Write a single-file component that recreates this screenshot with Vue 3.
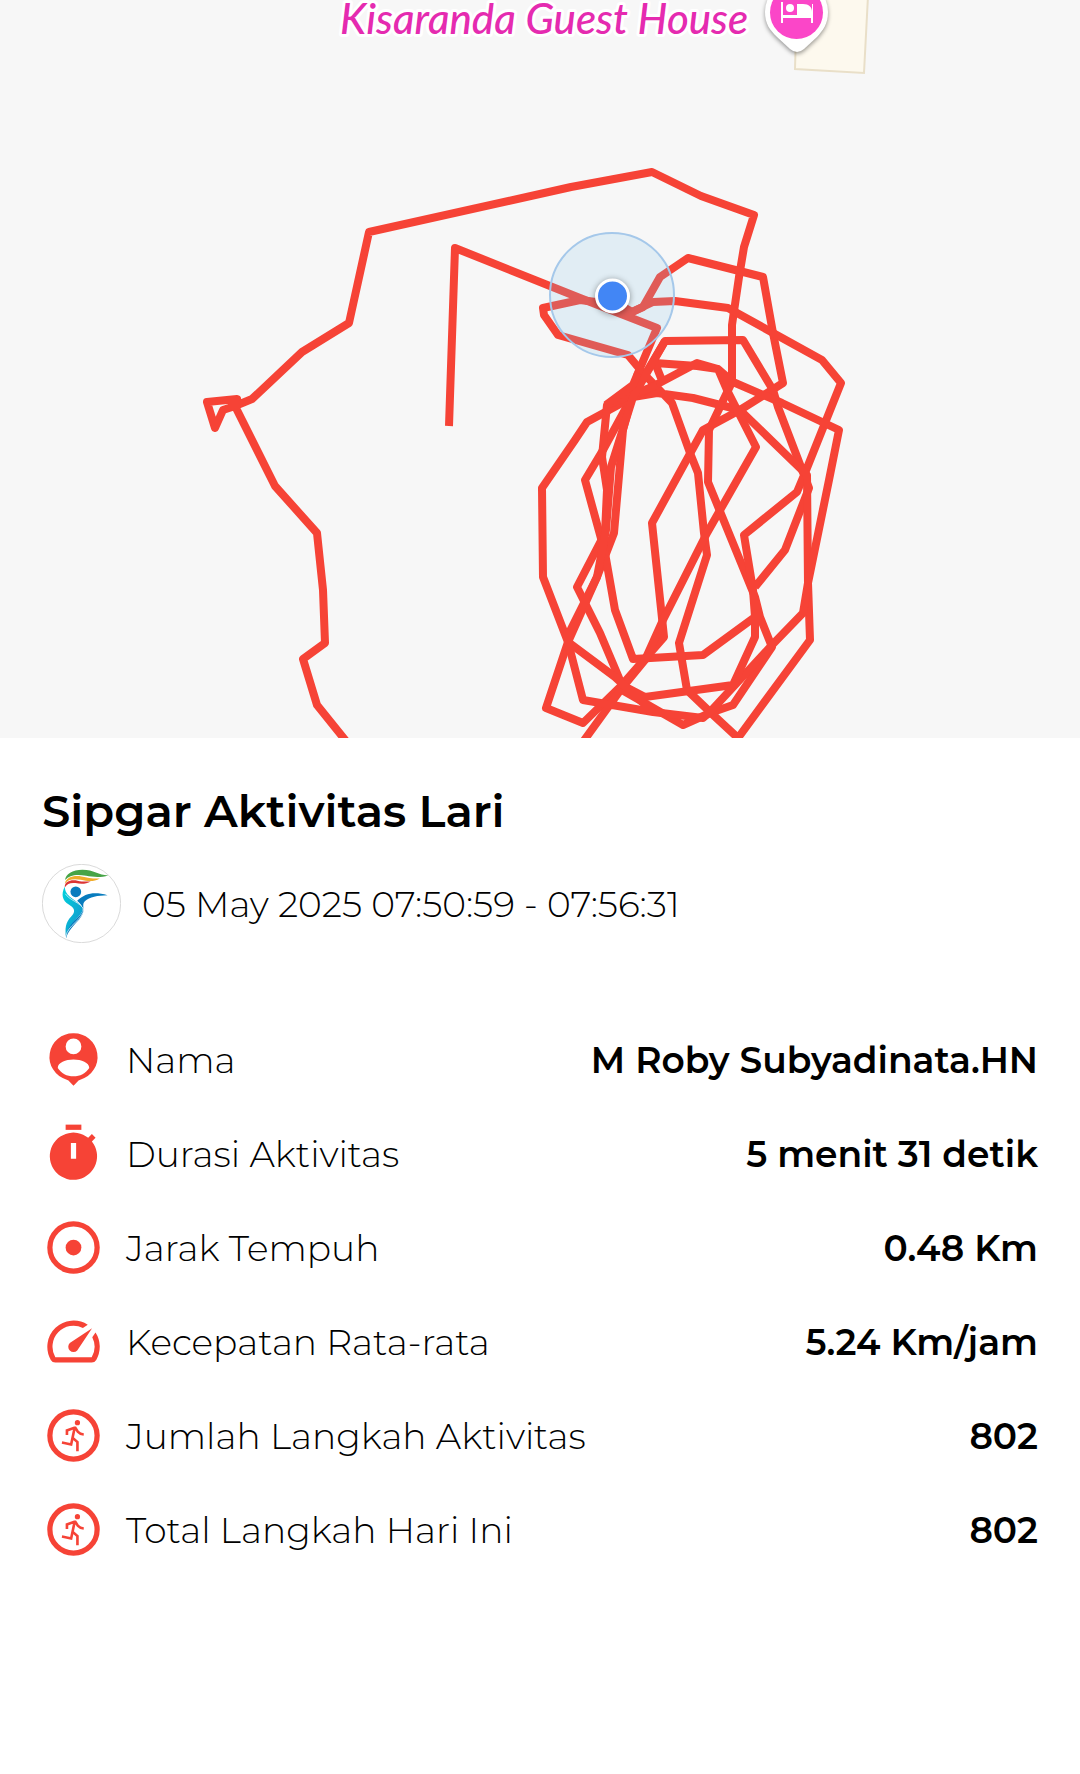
<template>
  <main class="activity">
    <svg class="map" viewBox="0 0 1080 738" role="img" aria-label="Rute lari">
      <rect width="1080" height="738" fill="#f7f7f7" />
      <path class="building" d="M797-4 795 69 864 73 868-4" />

      <text class="place" x="340" y="34">Kisaranda Guest House</text>

      <g class="pin">
        <path class="pin-body" d="M765 12a31.500 31.500 0 0 1 63 0c0 12-5 18-11 25l-13 12q-7 6-14 0l-13-12c-7-7-12-13-12-25z" />
        <circle cx="796.500" cy="12.500" r="26.500" fill="#fb46c8" />
        <path d="M781 2h2v13h14V4h6c6 0 9 3 9 8V4h1v19h-2v-5h-28v5h-2z" fill="#fff" />
        <circle cx="790" cy="8" r="4" fill="#fff" />
      </g>

      <polyline v-for="(track, i) in tracks" :key="i" class="track" :points="track" />

      <circle class="accuracy" cx="612" cy="295" r="62" />
      <circle class="me" cx="612.500" cy="296" r="16" />
    </svg>

    <section class="info">
      <h1 class="title">Sipgar Aktivitas Lari</h1>

      <div class="when">
        <svg class="avatar" viewBox="37 42 236 236" aria-hidden="true">
          <defs>
            <linearGradient id="shade" x1="0" x2="1" y1="0" y2="1">
              <stop offset="0" stop-color="#00d3dc" />
              <stop offset="1" stop-color="#1590cc" />
            </linearGradient>
          </defs>
          <circle cx="155" cy="160" r="117" fill="#fff" stroke="#c8c8c8" stroke-width="2" />
          <path d="M106 90c1-18 22-31 52-31 34 0 47 16 77 17-25 8-49 4-66 1-28-5-50-3-63 13z" fill="#47a447" />
          <path d="M105 101c4-20 27-26 50-22 20 4 33 7 55 6-20 12-38 8-57 4-23-4-39-1-48 12z" fill="#f0ad2c" />
          <path d="M105 112c-1-20 21-24 38-20 14 3 25 3 40 2-16 9-32 7-46 5-15-2-25 2-32 13z" fill="#dc3434" />
          <circle cx="138" cy="125" r="16" fill="#087cbe" />
          <path d="M142 152c24-24 52-28 91-17-30 1-54 4-68 18-7 7-4 15-4 26 0 9-4 18-13 29-17 19-33 34-39 56-5-30 12-42 27-56 15-13 24-22 22-34-1-7-7-14-16-22z" fill="#087cbe" />
          <path d="M105 109c-12 24-7 42 12 54 15 9 21 19 11 31-14 15-25 29-19 66 5-30 20-45 37-61 12-12 16-22 8-32-14-18-49-27-49-58z" fill="url(#shade)" />
          <path d="M107 131c10 18 45 27 54 45 1 32-49 48-53 84" fill="none" stroke="#fff" stroke-width="2" />
        </svg>
        <time class="date">05 May 2025 07:50:59 - 07:56:31</time>
      </div>

      <dl class="stats">
        <div v-for="row in rows" :key="row.label" class="row">
          <svg class="icon" viewBox="0 0 24 24" aria-hidden="true">
            <path v-if="row.icon === 'person'" fill-rule="evenodd" d="M12 2a9 9 0 0 0-2.800 17.600q1 .3 1.500 1.100L12 22l1.300-1.300q.5-.8 1.500-1.100A9 9 0 0 0 12 2zm0 2a3 3 0 1 1 0 6 3 3 0 0 1 0-6zM6 15.200C6 13.200 9 12 12 12s6 1.200 6 3.200c-1.300 2-3.500 3.200-6 3.200s-4.700-1.200-6-3.200z" />
            <template v-else-if="row.icon === 'timer'">
              <path d="M9 1h6v2H9z" />
              <path fill-rule="evenodd" d="M19 7.400l1.400-1.400L19 4.600l-1.400 1.400A9 9 0 1 0 19 7.400zM11 8h2v6h-2z" />
            </template>
            <template v-else-if="row.icon === 'target'">
              <circle class="ring" cx="12" cy="12" r="9" />
              <circle cx="12" cy="12" r="3" />
            </template>
            <template v-else-if="row.icon === 'speed'">
              <path d="M20.380 8.570l-1.230 1.850a8 8 0 0 1-.22 7.580H5.070A8 8 0 0 1 15.580 6.850l1.850-1.230A10 10 0 0 0 3.350 19a2 2 0 0 0 1.720 1h13.850a2 2 0 0 0 1.740-1 10 10 0 0 0-.27-10.440z" />
              <path d="M10.590 15.410a2 2 0 0 0 2.830 0l5.660-8.490-8.490 5.660a2 2 0 0 0 0 2.830z" />
            </template>
            <template v-else>
              <circle class="ring" cx="12" cy="12" r="9" />
              <circle cx="13.500" cy="7.100" r="1" />
              <path class="runner" d="M9.500 11.800V10.100L12.300 9.100H12.700L13.600 10.500Q14.500 11.500 15.900 11.600M12.400 9.200L11.100 15.400L7.600 14.700M11.700 12.900L13.500 14.500V18" />
            </template>
          </svg>
          <dt class="label">{{ row.label }}</dt>
          <dd class="value">{{ row.value }}</dd>
        </div>
      </dl>
    </section>
  </main>
</template>

<script setup>
const rows = [
  { icon: 'person', label: 'Nama', value: 'M Roby Subyadinata.HN' },
  { icon: 'timer', label: 'Durasi Aktivitas', value: '5 menit 31 detik' },
  { icon: 'target', label: 'Jarak Tempuh', value: '0.48 Km' },
  { icon: 'speed', label: 'Kecepatan Rata-rata', value: '5.24 Km/jam' },
  { icon: 'run', label: 'Jumlah Langkah Aktivitas', value: '802' },
  { icon: 'run', label: 'Total Langkah Hari Ini', value: '802' }
]

// GPS track, split into laps
const tracks = [
  // outer lap
  '350,746 317,705 303,659 325,643 323,590 317,533 275,486 235,406 237,399 207,402 215,428 223,410 235,406 252,399 302,352 349,323 369,232 571,187 652,172 701,196 754,215 744,247 739,277 732,325 732,382 709,430 708,482 755,597 760,617 772,647 733,705 710,713 683,725 622,690',
  // start
  '449,426 455,248 580,298 657,328 638,373 623,430 614,533 597,577 568,642 546,708 583,723 622,685 664,637 652,523 703,430 740,410 783,383 773,333 763,277 688,258 660,277 643,307 632,312 620,305',
  // inner laps
  '632,312 653,302 675,301 728,308 822,360 841,383 805,473 797,492 744,535 753,590 755,617 703,655 633,659 615,610 605,553 585,480 603,450 633,395 665,341 743,340 773,390 778,407 809,488 785,550 755,587',
  '620,305 580,300 543,308 544,315 558,335 628,355 643,373 672,403 690,453 698,473 704,533 707,555 679,643 687,690 710,712 738,738 810,640 808,583 807,475 740,410 693,398 657,393 633,397',
  '663,383 655,363 697,366 718,369 733,382 782,403 839,430 829,480 808,583 803,613 772,645 710,712 703,718 653,712 583,700 568,642 543,577 542,488 575,440 587,422 633,397 697,363 718,369 727,390 756,447 707,533 663,620 645,660 622,688 580,746',
  '657,385 607,405 602,457 607,490 605,533 577,587 600,633 622,685 645,697 733,685 755,637 755,597',
  '665,341 633,397 611,467 606,530 597,577 568,635 568,642 615,677 653,712',
  '606,405 633,385 638,373'
]
</script>

<style>
body {
  background: #fff;
}
</style>

<style scoped>
.activity {
  min-height: 100vh;
  background: #fff;
  color: #000;
  font-family: Montserrat, Inter, "Liberation Sans", sans-serif;
}

.map {
  display: block;
  width: 100%;
  height: auto;
}

.building {
  fill: #fdf9ee;
  stroke: #e9dfc8;
  stroke-width: 2;
}

.place {
  font-family: Lato, sans-serif;
  font-size: 42px;
  font-style: italic;
  font-weight: 500;
  fill: #e52bb0;
  stroke: #fff;
  stroke-width: 6px;
  stroke-linejoin: round;
  paint-order: stroke;
}

.pin-body {
  fill: #fff;
  filter: drop-shadow(0 2px 2px rgba(0, 0, 0, 0.4));
}

.track {
  fill: none;
  stroke: #f64336;
  stroke-width: 8;
  stroke-linejoin: round;
}

.accuracy {
  fill: rgba(131, 195, 236, 0.19);
  stroke: #a5c8ea;
  stroke-width: 2;
}

.me {
  fill: #4286f5;
  stroke: #fff;
  stroke-width: 3;
  filter: drop-shadow(0 1px 3px rgba(0, 0, 0, 0.4));
}

.info {
  padding: 45px 42px;
}

.title {
  margin: 0 0 25px;
  font-size: 45px;
  font-weight: 600;
  line-height: 56px;
}

.when {
  display: flex;
  align-items: center;
  gap: 21px;
  margin-bottom: 85px;
}

.avatar {
  flex: none;
  width: 79px;
  height: 79px;
}

.date,
.label,
.value {
  font-size: 36px;
  line-height: 44px;
}

.date,
.label {
  font-weight: 300;
}

.stats {
  display: grid;
  gap: 31px;
  margin: 0;
}

.row {
  display: flex;
  align-items: center;
  gap: 21px;
}

.icon {
  flex: none;
  width: 63px;
  height: 63px;
  fill: #f64336;
}

.ring {
  fill: none;
  stroke: #f64336;
  stroke-width: 2;
}

.runner {
  fill: none;
  stroke: #f64336;
  stroke-width: 1;
}

.value {
  margin: 0 0 0 auto;
  font-weight: 600;
  text-align: right;
}
</style>
